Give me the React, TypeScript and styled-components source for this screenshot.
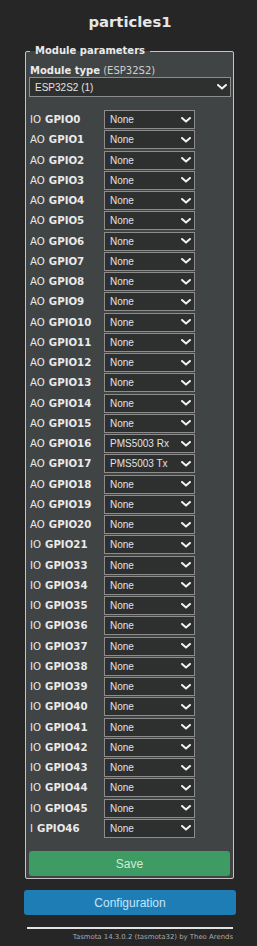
import React from "react";
import styled, { createGlobalStyle } from "styled-components";

const Global = createGlobalStyle`
  html, body { margin: 0; padding: 0; background: #262626; }
  body { font-family: "DejaVu Sans", Verdana, sans-serif; color: #eaeaea; }
`;

const Page = styled.div`
  width: 257px;
  padding: 0 21px 0 24px;
  box-sizing: border-box;
  display: flex;
  flex-direction: column;
`;

const Title = styled.h2`
  margin: 0;
  height: 42px;
  display: flex;
  align-items: center;
  justify-content: center;
  font-size: 14.8px;
  font-weight: bold;
  color: #e6e6e6;
  padding-top: 1px;
  box-sizing: border-box;
`;

const Fieldset = styled.fieldset`
  margin: 3px 2px 0 1px;
  padding: 0 2px 2px 3px;
  border: 1px solid #c4c4c4;
  border-radius: 2px;
  background-color: rgb(64, 68, 68);
  min-width: 0;
`;

const Legend = styled.legend`
  font-size: 10px;
  font-weight: bold;
  line-height: 12px;
  padding: 0 5px;
  margin-left: 1px;
`;

const ModuleLabel = styled.div`
  margin-top: 7px;
  font-size: 10px;
  line-height: 13px;
  padding-left: 1px;
  white-space: nowrap;
  b { font-weight: bold; }
  span { color: #d0d0d0; }
`;

const SelectBox = styled.div<{ $w?: number; $h: number }>`
  position: relative;
  display: flex;
  align-items: center;
  width: ${(p) => (p.$w ? `${p.$w}px` : "100%")};
  height: ${(p) => p.$h}px;
  box-sizing: border-box;
  background-color: rgb(46, 48, 48);
  color: rgb(226, 226, 226);
  border: 1px solid rgb(140, 140, 140);
  font-family: "Liberation Sans", Arial, sans-serif;
  font-size: 10px;
  padding: 0 0 0 5px;
  white-space: nowrap;
`;

const Chevron = styled.svg`
  position: absolute;
  right: 3px;
  top: 50%;
  margin-top: -3px;
  width: 10px;
  height: 6px;
  pointer-events: none;
`;

const GpioGrid = styled.div`
  margin-top: 13px;
  display: grid;
  grid-template-columns: 75px 91px;
  grid-auto-rows: 19px;
  row-gap: 1.25px;
`;

const GpioLabel = styled.div`
  display: flex;
  align-items: center;
  font-size: 10.2px;
  padding-left: 1px;
  white-space: nowrap;
  b { font-weight: bold; margin-left: 4px; }
`;

const Button = styled.button<{ $bg: string; $fg: string }>`
  display: block;
  width: 100%;
  height: 25px;
  border: 0;
  border-radius: 3px;
  background: ${(p) => p.$bg};
  color: ${(p) => p.$fg};
  font-family: "Liberation Sans", Arial, sans-serif;
  font-size: 12px;
  padding: 0;
`;

const SaveArea = styled.div`
  margin-top: 13.5px;
  padding-right: 1px;
`;

const ConfigArea = styled.div`
  margin-top: 11px;
`;

const Footer = styled.div`
  margin-top: 12px;
  padding: 0 3px;
  text-align: right;
`;

const Rule = styled.div`
  height: 2px;
  background: #e2e2e2;
`;

const FooterText = styled.div`
  margin-top: 4px;
  font-size: 6.9px;
  color: #aaaaaa;
  line-height: 9px;
`;

const Arrow = () => (
  <Chevron viewBox="0 0 10 6">
    <polyline points="1,1 5,4.6 9,1" fill="none" stroke="#f2f2f2" strokeWidth="2" strokeLinecap="round" strokeLinejoin="round" />
  </Chevron>
);

type Gpio = { io: string; n: number; v: string };

const gpioNums = [...Array.from({ length: 22 }, (_, i) => i), ...Array.from({ length: 14 }, (_, i) => 33 + i)];

const gpios: Gpio[] = gpioNums.map((n) => ({
  io: n === 0 ? "IO" : n <= 20 ? "AO" : n === 46 ? "I" : "IO",
  n,
  v: n === 16 ? "PMS5003 Rx" : n === 17 ? "PMS5003 Tx" : "None",
}));

export default function App() {
  return (
    <Page>
      <Global />
      <Title>particles1</Title>
      <Fieldset>
        <Legend>Module parameters</Legend>
        <ModuleLabel>
          <b>Module type</b> <span>(ESP32S2)</span>
        </ModuleLabel>
        <SelectBox $h={20}>
          ESP32S2 (1)
          <Arrow />
        </SelectBox>
        <GpioGrid>
          {gpios.map((g) => (
            <React.Fragment key={g.n}>
              <GpioLabel>
                {g.io}
                <b>GPIO{g.n}</b>
              </GpioLabel>
              <SelectBox $w={91} $h={19}>
                {g.v}
                <Arrow />
              </SelectBox>
            </React.Fragment>
          ))}
        </GpioGrid>
        <SaveArea>
          <Button $bg="#3e9b63" $fg="#cdeed6">Save</Button>
        </SaveArea>
      </Fieldset>
      <ConfigArea>
        <Button $bg="#1f7db5" $fg="#c6e6fa">Configuration</Button>
      </ConfigArea>
      <Footer>
        <Rule />
        <FooterText>Tasmota 14.3.0.2 (tasmota32) by Theo Arends</FooterText>
      </Footer>
    </Page>
  );
}
